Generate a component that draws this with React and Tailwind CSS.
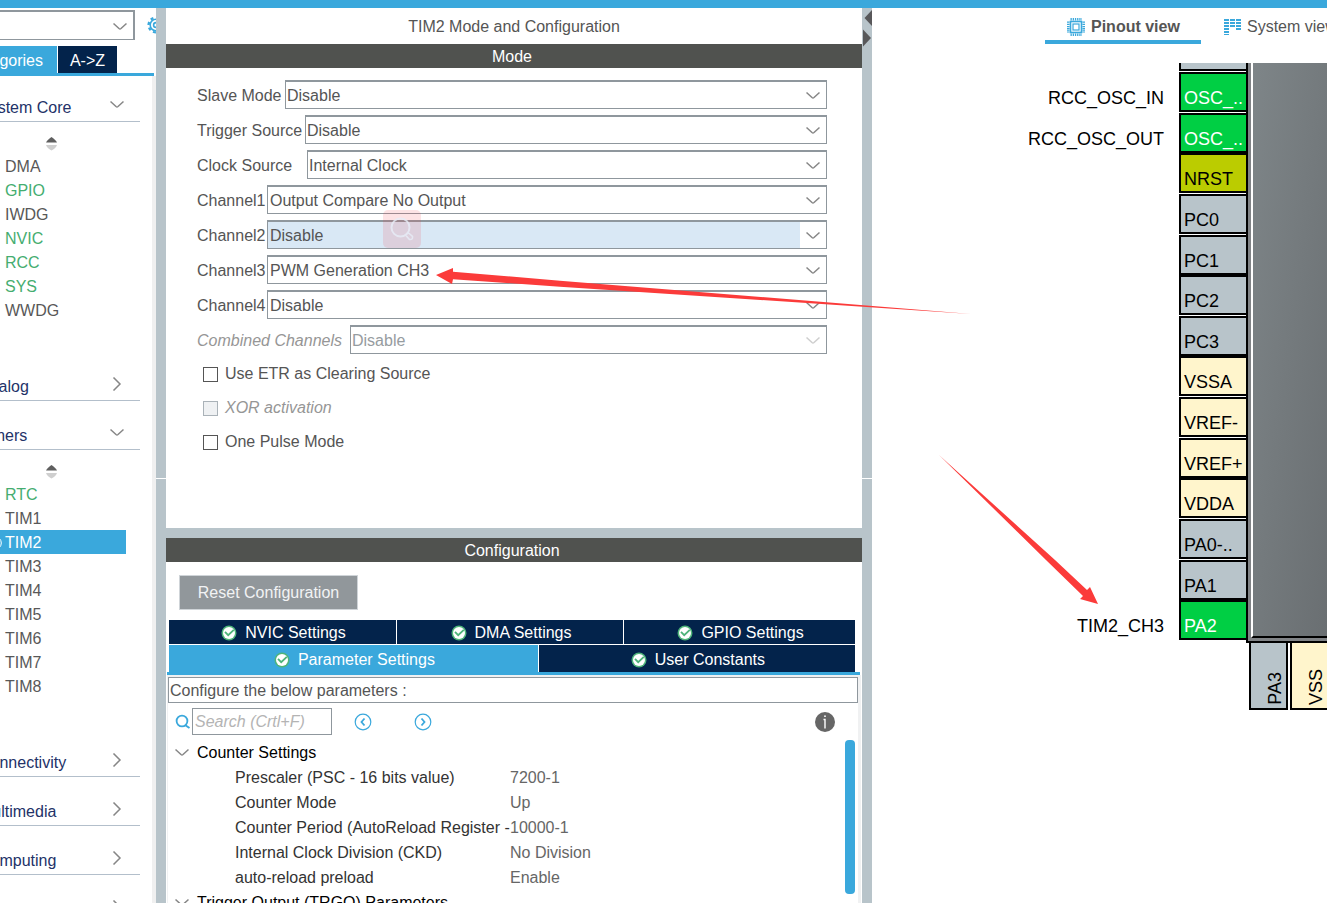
import { useState } from "react";
import clsx from "clsx";

const coreItems = [
	{ name: "DMA" },
	{ name: "GPIO", used: true },
	{ name: "IWDG" },
	{ name: "NVIC", used: true },
	{ name: "RCC", used: true },
	{ name: "SYS", used: true },
	{ name: "WWDG" },
];

const timerItems = [
	{ name: "RTC", used: true },
	{ name: "TIM1" },
	{ name: "TIM2" },
	{ name: "TIM3" },
	{ name: "TIM4" },
	{ name: "TIM5" },
	{ name: "TIM6" },
	{ name: "TIM7" },
	{ name: "TIM8" },
];

const modeFields = [
	{ id: "slave", label: "Slave Mode", value: "Disable", width: "w-[88px]" },
	{ id: "trigger", label: "Trigger Source", value: "Disable", width: "w-[108px]" },
	{ id: "clock", label: "Clock Source", value: "Internal Clock", width: "w-[110px]" },
	{ id: "ch1", label: "Channel1", value: "Output Compare No Output", width: "w-[70px]" },
	{ id: "ch2", label: "Channel2", value: "Disable", width: "w-[70px]", active: true },
	{ id: "ch3", label: "Channel3", value: "PWM Generation CH3", width: "w-[70px]" },
	{ id: "ch4", label: "Channel4", value: "Disable", width: "w-[70px]" },
	{ id: "combined", label: "Combined Channels", value: "Disable", width: "w-[153px]", disabled: true },
];

const modeChecks = [
	{ id: "etr", label: "Use ETR as Clearing Source" },
	{ id: "xor", label: "XOR activation", disabled: true },
	{ id: "pulse", label: "One Pulse Mode" },
];

const parameters = [
	["Prescaler (PSC - 16 bits value)", "7200-1"],
	["Counter Mode", "Up"],
	["Counter Period (AutoReload Register -.", "10000-1"],
	["Internal Clock Division (CKD)", "No Division"],
	["auto-reload preload", "Enable"],
];

const pinColours = {
	used: "bg-[#00cf44] text-white",
	reset: "bg-[#bbcc00] text-black",
	free: "bg-[#b8c4ca] text-black",
	power: "bg-[#fff5cc] text-black",
};

const leftPins = [
	{ name: "PF10", type: "free" },
	{ name: "OSC_..", type: "used", signal: "RCC_OSC_IN" },
	{ name: "OSC_..", type: "used", signal: "RCC_OSC_OUT" },
	{ name: "NRST", type: "reset" },
	{ name: "PC0", type: "free" },
	{ name: "PC1", type: "free" },
	{ name: "PC2", type: "free" },
	{ name: "PC3", type: "free" },
	{ name: "VSSA", type: "power" },
	{ name: "VREF-", type: "power" },
	{ name: "VREF+", type: "power" },
	{ name: "VDDA", type: "power" },
	{ name: "PA0-..", type: "free" },
	{ name: "PA1", type: "free" },
	{ name: "PA2", type: "used", signal: "TIM2_CH3" },
];

const bottomPins = [
	{ name: "PA3", type: "free" },
	{ name: "VSS", type: "power" },
];

const PIN_PITCH = 40.64;

function Chevron({ right, className }) {
	return (
		<svg
			viewBox="0 0 14 14"
			className={clsx("size-3.5 shrink-0 fill-none stroke-[#868686]", className)}
			strokeWidth="1.5"
		>
			{right ? (
				<path d="M3.5 0.5 L10 7 L3.5 13.5" />
			) : (
				<path d="M0.5 3.5 L6 8.5 Q7 9.3 8 8.5 L13.5 3.5" />
			)}
		</svg>
	);
}

function CheckBadge({ className }) {
	return (
		<svg viewBox="0 0 16 16" className={clsx("size-4 shrink-0", className)}>
			<circle cx="8" cy="8" r="7.5" fill="#4fb47a" />
			<circle cx="8" cy="8" r="6" fill="#fff" />
			<path
				d="M4 6.8 L7.2 10.2 L12.8 4.8"
				fill="none"
				stroke="#4fb47a"
				strokeWidth="1.8"
			/>
		</svg>
	);
}

function SortIcon() {
	return (
		<svg viewBox="0 0 11 14" className="h-3.5 w-[11px]">
			<path d="M0 5.5 Q1 3 5.5 0 Q10 3 11 5.5 Z" fill="#5f5f5f" />
			<path d="M0 8 H11 Q10 11 5.5 13.5 Q1 11 0 8 Z" fill="#cfcfcf" />
		</svg>
	);
}

function Section({ title, items, selected, onSelect }) {
	return (
		<section className="pt-[18px] first:pt-[15px]">
			<button className="flex h-[31px] w-[184px] items-center justify-between border-b border-[#b3bfcb] pl-[23px] pr-4 pt-[3px] text-left text-[#233268]">
				{title}
				<Chevron right={!items} className="mb-1.5" />
			</button>
			{items && (
				<>
					<div className="flex h-8 items-center pl-[90px] pt-3">
						<SortIcon />
					</div>
					<ul className="pb-[30px]">
						{items.map((item) => (
							<li key={item.name}>
								<button
									onClick={() => onSelect(item.name)}
									className={clsx(
										"flex h-6 w-[170px] items-center gap-[3px] pl-8 pt-px text-left",
										selected === item.name
											? "bg-[#3aa8dc] text-white"
											: item.used
												? "text-[#45ad70]"
												: "text-[#585858]"
									)}
								>
									<span className="w-3.5">
										{selected === item.name && (
											<svg
												viewBox="0 0 14 14"
												className="size-3.5 fill-none stroke-white"
											>
												<circle cx="7" cy="7" r="6.3" />
												<path d="M4 7 L6.3 9.2 L10 5" />
											</svg>
										)}
									</span>
									{item.name}
								</button>
							</li>
						))}
					</ul>
				</>
			)}
		</section>
	);
}

function Sidebar() {
	const [selected, setSelected] = useState("TIM2");

	return (
		<aside className="flex w-[156px] shrink-0 justify-end overflow-hidden">
			<div className="w-[200px] shrink-0">
				<div className="flex items-center pt-0.5">
					<div className="relative w-[179px] shrink-0">
						<select
							aria-label="Search peripherals"
							className="block h-[30px] w-full appearance-none border border-r-2 border-t-2 border-[#8f979d] bg-white"
						>
							<option></option>
						</select>
						<Chevron className="pointer-events-none absolute right-2 top-2.5" />
					</div>
					<svg
						viewBox="0 0 18 18"
						className="ml-3 size-[18px] shrink-0 fill-none stroke-[#3aa8dc]"
						strokeWidth="1.6"
					>
						<circle cx="9" cy="9" r="2.4" />
						<circle cx="9" cy="9" r="5.8" />
						<circle cx="9" cy="9" r="7.4" strokeWidth="2.4" strokeDasharray="3 2.8" />
					</svg>
				</div>
				<div className="mr-0.5 mt-1.5 flex gap-px border-b-[3px] border-[#3aa8dc] text-white">
					<button className="h-[27px] w-[101px] bg-[#3aa8dc] pr-3.5 pt-0.5 text-right">
						Categories
					</button>
					<button className="h-[27px] w-[59px] bg-[#03234b] pt-0.5">{"A->Z"}</button>
				</div>
				<nav className="border-r-4 border-[#f0f0f0]">
					<Section
						title="System Core"
						items={coreItems}
						selected={selected}
						onSelect={setSelected}
					/>
					<Section title="Analog" />
					<Section
						title="Timers"
						items={timerItems}
						selected={selected}
						onSelect={setSelected}
					/>
					<Section title="Connectivity" />
					<Section title="Multimedia" />
					<Section title="Computing" />
					<Section title="Middleware" />
				</nav>
			</div>
		</aside>
	);
}

function Splitter({ arrows }) {
	return (
		<div className="flex w-2.5 shrink-0 flex-col gap-px">
			<div className="h-[470px] bg-[#b8c4ca]">
				{arrows && (
					<svg viewBox="0 0 10 40" className="h-10 w-2.5 fill-[#58585a]">
						<path d="M10 2 V18 L2.5 10 Z" />
						<path d="M1 21.5 V38.5 L9 30 Z" />
					</svg>
				)}
			</div>
			<div className="flex-1 bg-[#b8c4ca]" />
		</div>
	);
}

function ModeField({ field }) {
	return (
		<div className="flex h-[29px] items-center">
			<label
				htmlFor={field.id}
				className={clsx(
					"shrink-0 whitespace-nowrap pt-0.5",
					field.width,
					field.disabled && "italic text-[#969696]"
				)}
			>
				{field.label}
			</label>
			<div className="relative flex-1">
				<select
					id={field.id}
					disabled={field.disabled}
					className={clsx(
						"block h-[29px] w-full appearance-none border border-t-2 border-[#8f979d] pt-px opacity-100",
						field.id.startsWith("ch") ? "pl-0.5" : "pl-px",
						field.active ? "bg-[#d9e8f5]" : "bg-white",
						field.disabled && "text-[#969ca0]"
					)}
				>
					<option>{field.value}</option>
				</select>
				<span className="pointer-events-none absolute bottom-px right-px top-0.5 flex w-[26px] items-center justify-center bg-white pt-0.5">
					<Chevron className={clsx(field.disabled && "opacity-40")} />
				</span>
			</div>
		</div>
	);
}

function ModePanel() {
	return (
		<section>
			<h1 className="flex h-9 items-center justify-center pt-px">
				TIM2 Mode and Configuration
			</h1>
			<h2 className="flex h-6 items-center justify-center bg-[#50524f] pr-1 pt-px text-white">
				Mode
			</h2>
			<div className="flex flex-col gap-1.5 pl-[31px] pr-[35px] pt-3">
				{modeFields.map((field) => (
					<ModeField key={field.id} field={field} />
				))}
			</div>
			<div className="flex flex-col pb-[69px] pl-[37px] pt-[3px]">
				{modeChecks.map((check) => (
					<label
						key={check.id}
						className={clsx(
							"flex h-[34px] items-center gap-[7px]",
							check.disabled && "italic text-[#969696]"
						)}
					>
						<input
							type="checkbox"
							disabled={check.disabled}
							className={clsx(
								"size-[15px] appearance-none border",
								check.disabled
									? "border-[#aab2b8] bg-[#eff1f3]"
									: "border-[#555] bg-white"
							)}
						/>
						{check.label}
					</label>
				))}
			</div>
		</section>
	);
}

function SettingsTab({ label, active, className }) {
	return (
		<button
			className={clsx(
				"flex items-center justify-center gap-2 pl-0.5 pt-0.5 text-white",
				active ? "bg-[#3aa8dc]" : "bg-[#03234b]",
				className
			)}
		>
			<CheckBadge />
			{label}
		</button>
	);
}

function StepButton({ label, path }) {
	return (
		<button aria-label={label}>
			<svg
				viewBox="0 0 18 18"
				className="size-[18px] fill-none stroke-[#3aa8dc]"
			>
				<circle cx="9" cy="9" r="7.8" strokeWidth="1.2" />
				<path d={path} strokeWidth="1.8" />
			</svg>
		</button>
	);
}

function ConfigurationPanel() {
	return (
		<section className="flex min-h-0 flex-1 flex-col border-t-[10px] border-[#b8c4ca]">
			<h2 className="flex h-6 shrink-0 items-center justify-center bg-[#50524f] pr-1 pt-0.5 text-white">
				Configuration
			</h2>
			<button className="ml-[13px] mt-[13px] h-[35px] w-[179px] shrink-0 border border-[#cfd4d8] bg-[#91979b] text-[#f2f3f4]">
				Reset Configuration
			</button>
			<div className="ml-px mr-0.5 mt-2.5 shrink-0 border-b-[3px] border-[#3aa8dc] pl-0.5 pr-[5px]">
				<div className="flex h-6 gap-px">
					<SettingsTab label="NVIC Settings" className="flex-[227]" />
					<SettingsTab label="DMA Settings" className="flex-[226]" />
					<SettingsTab label="GPIO Settings" className="flex-[231]" />
				</div>
				<div className="mt-px flex h-[27px] gap-px">
					<SettingsTab label="Parameter Settings" active className="flex-[369]" />
					<SettingsTab label="User Constants" className="flex-[316]" />
				</div>
			</div>
			<div className="ml-px mr-px flex min-h-0 flex-1 flex-col border-x border-t-2 border-r-[3px] border-[#f0f1f2]">
				<p className="h-[26px] shrink-0 border border-[#8f979d] pl-px leading-[26px]">
					Configure the below parameters :
				</p>
				<div className="flex h-9 shrink-0 items-center pl-[7px] pr-[23px] pt-px">
					<svg
						viewBox="0 0 16 16"
						className="size-4 shrink-0 fill-none stroke-[#3aa8dc]"
					>
						<circle cx="7" cy="7" r="5.4" strokeWidth="1.8" />
						<path d="M10 11 L14.5 14" strokeWidth="2" />
					</svg>
					<input
						aria-label="Search parameters"
						placeholder="Search (Crtl+F)"
						className="ml-px h-[27px] w-[140px] border border-[#8f979d] pl-0.5 pt-px italic placeholder:text-[#b4b4b4]"
					/>
					<div className="ml-[22px] flex gap-[42px]">
						<StepButton label="Previous match" path="M10.5 5.5 L7.5 9 L10.5 12.5" />
						<StepButton label="Next match" path="M7.5 5.5 L10.5 9 L7.5 12.5" />
					</div>
					<button aria-label="Information" className="ml-auto">
						<svg viewBox="0 0 20 20" className="size-5">
							<circle cx="10" cy="10" r="10" fill="#666" />
							<path d="M8.5 7.5 H10 V16.5" fill="none" stroke="#fff" strokeWidth="1.4" />
							<circle cx="10" cy="4.2" r="0.9" fill="#fff" />
						</svg>
					</button>
				</div>
				<div className="flex min-h-0 flex-1 overflow-hidden pr-[3px]">
					<div className="min-w-0 flex-1 pt-px">
						<table className="w-full table-fixed text-left">
							<colgroup>
								<col className="w-[342px]" />
								<col />
							</colgroup>
							<thead>
								<tr className="h-[25px]">
									<th colSpan="2" className="p-0 font-normal text-black">
										<div className="flex items-center gap-2 pl-[7px]">
											<Chevron />
											Counter Settings
										</div>
									</th>
								</tr>
							</thead>
							<tbody>
								{parameters.map(([name, value]) => (
									<tr key={name} className="h-[25px]">
										<td className="overflow-hidden whitespace-nowrap p-0 pl-[67px] text-[#333]">
											{name}
										</td>
										<td className="p-0 text-[#666]">{value}</td>
									</tr>
								))}
							</tbody>
						</table>
						<div className="flex h-[25px] items-center gap-2 pl-[7px] text-black">
							<Chevron />
							Trigger Output (TRGO) Parameters
						</div>
					</div>
					<div className="mt-px h-[154px] w-2.5 rounded bg-[#3aa8dc]" />
				</div>
			</div>
		</section>
	);
}

function PinoutIcon() {
	return (
		<svg viewBox="0 0 18 18" className="size-[18px] shrink-0 fill-none stroke-[#3aa8dc]">
			<rect x="3.5" y="3.5" width="11" height="11" strokeWidth="1.6" />
			<rect x="6" y="6" width="6" height="6" strokeWidth="1.2" />
			<path
				d="M3.5 1.3 H15 M3.5 16.7 H15 M1.3 3.5 V15 M16.7 3.5 V15"
				strokeWidth="2.6"
				strokeDasharray="1.3 0.9"
			/>
		</svg>
	);
}

function SystemIcon() {
	return (
		<svg viewBox="0 0 18 18" className="size-[18px] shrink-0 fill-none stroke-[#3aa8dc]">
			<path d="M3.5 1 V17" strokeWidth="5" strokeDasharray="2 1" />
			<path d="M9.5 1 V9 M15.5 1 V12" strokeWidth="5" strokeDasharray="2 1" />
		</svg>
	);
}

function Pinout() {
	return (
		<div className="relative mt-[19px] flex-1 overflow-hidden text-[18px] leading-[22px]">
			{leftPins.map((pin, i) => (
				<div
					key={i}
					className="absolute left-0 flex h-10"
					style={{ top: Math.round(9 + (i - 1) * PIN_PITCH) }}
				>
					<span className="flex w-[292px] items-end justify-end pb-[3px] text-black">
						{pin.signal}
					</span>
					<button
						className={clsx(
							"ml-[15px] flex w-[69px] items-end border-2 border-black pb-px pl-[3px]",
							pinColours[pin.type]
						)}
					>
						{pin.name}
					</button>
				</div>
			))}
			<div className="absolute left-[374px] right-0 top-0 h-[580px] border-b-2 border-l-2 border-black bg-[#808386] pb-[3px] pl-[3px]">
				<div className="h-full border-b-2 border-b-black border-l-2 border-l-white bg-linear-to-br from-[#7e8588] to-[#6a6f72]" />
			</div>
			<div className="absolute left-[377px] top-[580px] flex gap-0.5">
				{bottomPins.map((pin) => (
					<button
						key={pin.name}
						className={clsx(
							"flex h-[67px] w-[39px] items-end justify-end border-2 border-t-0 border-black pb-[3px]",
							pinColours[pin.type]
						)}
					>
						<span className="rotate-180 [writing-mode:vertical-rl]">{pin.name}</span>
					</button>
				))}
			</div>
		</div>
	);
}

function PinoutPanel() {
	return (
		<main className="flex min-w-0 flex-[455] flex-col overflow-hidden">
			<div className="flex h-9 shrink-0 pl-[173px]">
				<button className="flex w-[156px] shrink-0 items-center gap-1.5 border-b-4 border-[#3aa8dc] pl-[22px] pt-[5px] font-bold">
					<PinoutIcon />
					Pinout view
				</button>
				<button className="ml-[22px] flex shrink-0 items-center gap-1.5 pt-px">
					<SystemIcon />
					System view
				</button>
			</div>
			<Pinout />
		</main>
	);
}

// Red pointers and the lens mark drawn over the whole workspace
function Annotations() {
	return (
		<svg
			viewBox="0 0 1327 903"
			className="pointer-events-none absolute inset-0 size-full"
		>
			<rect x="383" y="210" width="38" height="38" rx="5" fill="#f03c46" opacity="0.14" />
			<g fill="none" stroke="#e8eef8" opacity="0.8" strokeWidth="1.6">
				<circle cx="400.5" cy="227.5" r="9" strokeWidth="2" />
				<path d="M405.5 235 L408 232.5 L412.5 236.5 Q413 240 409.5 239.5 Z" />
			</g>
			<g fill="#fb3b3a">
				<path d="M436 275 L453 268 V271.7 L560 280.7 L971 314 L560 286.7 L453 279.3 L452 284 Z" />
				<path d="M939 455 L1055 560 L1087 590 L1090 587 L1098 604 L1080 599 L1083 596 L1046 560 Z" />
			</g>
		</svg>
	);
}

export default function App() {
	return (
		<div className="relative flex h-screen flex-col overflow-hidden bg-white font-['Liberation_Sans',Arial,sans-serif] text-base text-[#555]">
			<div className="h-2 shrink-0 bg-[#3aa8dc]" />
			<div className="flex min-h-0 flex-1">
				<Sidebar />
				<Splitter />
				<div className="flex min-w-0 flex-[696] flex-col overflow-hidden">
					<ModePanel />
					<ConfigurationPanel />
				</div>
				<Splitter arrows />
				<PinoutPanel />
			</div>
			<Annotations />
		</div>
	);
}
